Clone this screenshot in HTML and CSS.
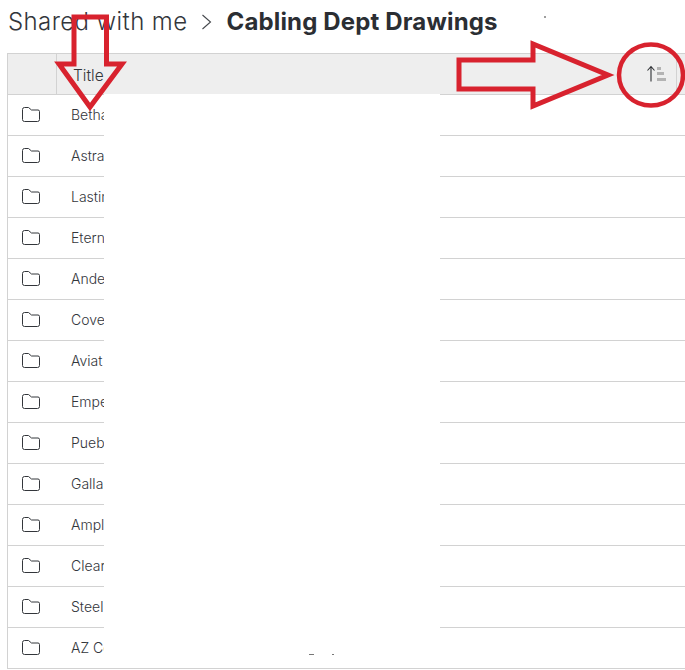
FILE: index.html
```html
<!DOCTYPE html>
<html lang="en">
<head>
    <meta charset="UTF-8">
    <title>Cabling Dept Drawings</title>
    <link rel="stylesheet" href="styles.css">
</head>
<body>
    <svg width="0" height="0" class="defs">
        <symbol id="folder" viewBox="0 0 18 15">
            <path d="M0.5 2.5 Q0.5 0.5 2.5 0.5 H6.5 L9.5 3 H16 Q17.5 3 17.5 4.5 V12.5 Q17.5 14.5 15.5 14.5 H2.5 Q0.5 14.5 0.5 12.5 Z" fill="none" stroke="#33363b" stroke-width="1"/>
        </symbol>
    </svg>

    <div class="page">
        <header class="crumbs">
            <span class="crumb">Shared with me</span>
            <svg class="crumb-sep" width="11" height="16" viewBox="0 0 11 16">
                <path d="M1.5 1 L9.5 8 L1.5 15" fill="none" stroke="#44474c" stroke-width="1.1"/>
            </svg>
            <span class="crumb-current">Cabling Dept Drawings</span>
        </header>

        <div class="list">
            <div class="list-head">
                <div class="head-icon"></div>
                <div class="head-title">Title</div>
                <div class="head-sort">
                    <svg width="20" height="18" viewBox="0 0 20 18">
                        <path d="M5 16.5 V1.5 M1.5 5.5 L5 1.5 L8.5 5.5" fill="none" stroke="#2f3236" stroke-width="1.1"/>
                        <rect x="11" y="2" width="4" height="3" fill="#b3b3b3"/>
                        <rect x="11" y="7" width="7" height="3" fill="#b3b3b3"/>
                        <rect x="11" y="13" width="9" height="3" fill="#b3b3b3"/>
                    </svg>
                </div>
            </div>
            <div class="row"><svg class="folder"><use href="#folder"/></svg><span class="name">Betha</span></div>
            <div class="row"><svg class="folder"><use href="#folder"/></svg><span class="name">Astra</span></div>
            <div class="row"><svg class="folder"><use href="#folder"/></svg><span class="name">Lastin</span></div>
            <div class="row"><svg class="folder"><use href="#folder"/></svg><span class="name">Etern</span></div>
            <div class="row"><svg class="folder"><use href="#folder"/></svg><span class="name">Ande</span></div>
            <div class="row"><svg class="folder"><use href="#folder"/></svg><span class="name">Cove</span></div>
            <div class="row"><svg class="folder"><use href="#folder"/></svg><span class="name">Aviat</span></div>
            <div class="row"><svg class="folder"><use href="#folder"/></svg><span class="name">Empe</span></div>
            <div class="row"><svg class="folder"><use href="#folder"/></svg><span class="name">Puebl</span></div>
            <div class="row"><svg class="folder"><use href="#folder"/></svg><span class="name">Galla</span></div>
            <div class="row"><svg class="folder"><use href="#folder"/></svg><span class="name">Ampl</span></div>
            <div class="row"><svg class="folder"><use href="#folder"/></svg><span class="name">Clear</span></div>
            <div class="row"><svg class="folder"><use href="#folder"/></svg><span class="name">Steel</span></div>
            <div class="row"><svg class="folder"><use href="#folder"/></svg><span class="name">AZ Co</span></div>
        </div>

        <!-- white box pasted over the names -->
        <div class="redact"></div>

        <!-- red markup drawn on top of the screenshot -->
        <svg class="markup" width="685" height="670" viewBox="0 0 685 670">
            <g fill="none" stroke="#d8222e" stroke-width="5" stroke-linejoin="miter">
                <polygon points="74,17 106.5,17 106.5,64 122,64 90,107 59,64 74,64"/>
                <polygon points="459,60 533,60 533,44 608,75 533,106 533,89 459,89"/>
                <ellipse cx="651" cy="75" rx="32" ry="30.5" stroke-width="4.5"/>
            </g>
            <circle cx="545" cy="17" r="0.8" fill="#222"/>
            <rect x="309" y="654" width="5" height="1" fill="#777"/>
            <rect x="332" y="654" width="2" height="1" fill="#777"/>
        </svg>
    </div>
</body>
</html>
```

FILE: styles.css
```css
/* General Styles */
html, body {
    margin: 0;
    padding: 0;
    background: white;
}

body {
    font-family: 'Inter', 'Liberation Sans', sans-serif;
    color: #33363b;
    overflow: hidden;
}

.defs {
    position: absolute;
}

.page {
    position: relative;
    width: 685px;
    height: 670px;
    overflow: hidden;
}

/* Breadcrumb */
.crumbs {
    display: flex;
    align-items: center;
    height: 43px;
    padding-left: 8px;
    font-size: 24px;
    white-space: nowrap;
}

.crumb {
    font-weight: 300;
    letter-spacing: 0.4px;
}

.crumb-sep {
    margin-left: 14px;
    margin-right: 14px;
}

.crumb-current {
    font-weight: 700;
    letter-spacing: 0.15px;
    color: #2b2e33;
}

/* List */
.list {
    margin-top: 10px;
    margin-left: 7px;
    border-left: 1px solid #d2d2d2;
    border-top: 1px solid #d2d2d2;
}

.list-head {
    display: flex;
    align-items: stretch;
    height: 40px;
    background: #eeeeee;
    border-bottom: 1px solid #d2d2d2;
}

.head-icon {
    width: 48px;
    border-right: 1px solid #d2d2d2;
}

.head-title {
    flex: 1;
    display: flex;
    align-items: center;
    padding-left: 16px;
    padding-top: 2px;
    font-size: 15.5px;
    font-weight: 300;
}

.head-sort {
    display: flex;
    align-items: center;
    width: 39px;
    border-right: 1px solid #d2d2d2;
    margin-right: 8px;
}

.head-sort svg {
    margin-left: 9px;
}

.row {
    display: flex;
    align-items: center;
    height: 40px;
    border-bottom: 1px solid #d2d2d2;
}

.folder {
    width: 18px;
    height: 15px;
    margin-left: 14px;
    margin-right: 31px;
    margin-bottom: 2px;
}

.name {
    margin-bottom: 2px;
    font-size: 14px;
    font-weight: 300;
}

/* Things on top of the list */
.redact {
    position: absolute;
    left: 104px;
    top: 94px;
    width: 336px;
    height: 561px;
    background: white;
}

.markup {
    position: absolute;
    left: 0;
    top: 0;
}
```
